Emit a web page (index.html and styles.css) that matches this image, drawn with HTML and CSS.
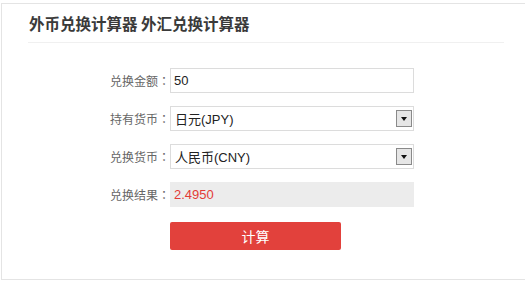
FILE: index.html
```html
<!DOCTYPE html>
<html lang="zh-CN">
<head>
<meta charset="utf-8">
<title>外币兑换计算器</title>
<link rel="stylesheet" href="styles.css">
</head>
<body>
<div class="panel">
  <div class="head"><h1 class="title">外币兑换计算器 外汇兑换计算器</h1></div>
  <div class="form">
    <div class="row">
      <label class="label">兑换金额<span class="colon" lang="zh-TW">：</span></label>
      <div class="field input">50</div>
    </div>
    <div class="row">
      <label class="label">持有货币<span class="colon" lang="zh-TW">：</span></label>
      <div class="field select"><span class="val">日元(JPY)</span><span class="arrow"><span class="tri"></span></span></div>
    </div>
    <div class="row">
      <label class="label">兑换货币<span class="colon" lang="zh-TW">：</span></label>
      <div class="field select"><span class="val">人民币(CNY)</span><span class="arrow"><span class="tri"></span></span></div>
    </div>
    <div class="row">
      <label class="label">兑换结果<span class="colon" lang="zh-TW">：</span></label>
      <div class="field result">2.4950</div>
    </div>
    <div class="row btnrow">
      <button class="btn">计算</button>
    </div>
  </div>
</div>
</body>
</html>
```
FILE: styles.css
```css
html, body {
  margin: 0;
  padding: 0;
  background: #fff;
  overflow: hidden;
}
body {
  font-family: "Liberation Sans", Arial, "Noto Sans CJK SC", sans-serif;
  color: #333;
}
.panel {
  margin: 3px 0 0 1px;
  width: 523px;
  height: 275px;
  border: 1px solid #e4e4e4;
  border-right: none;
}
.head {
  margin-left: 26px;
  width: 476px;
  height: 38px;
  border-bottom: 1px solid #f0f0f0;
  display: flex;
  align-items: center;
}
.title {
  margin: 0 0 0 1px;
  font-family: "Noto Sans CJK SC", sans-serif;
  font-size: 15.5px;
  font-weight: 700;
  color: #3a3a3a;
}
.form {
  padding-top: 25px;
  display: flex;
  flex-direction: column;
  gap: 13px;
}
.row {
  display: flex;
  align-items: center;
  height: 25px;
}
.label {
  width: 168px;
  text-align: right;
  font-family: "Noto Sans CJK SC", sans-serif;
  font-size: 12px;
  color: #666;
}
.colon {
  font-family: "Noto Sans CJK TC", "Noto Sans CJK SC", sans-serif;
}
.field {
  width: 244px;
  height: 25px;
  box-sizing: border-box;
  display: flex;
  align-items: center;
  font-family: "Liberation Sans", Arial, "Noto Sans CJK SC", sans-serif;
  font-size: 13px;
  color: #222;
}
.input {
  border: 1px solid #dcdcdc;
  padding-left: 3px;
}
.select {
  border: 1px solid #dcdcdc;
  padding-left: 4px;
  padding-right: 1px;
}
.select .val {
  flex: 1;
}
.arrow {
  width: 16px;
  height: 17px;
  box-sizing: border-box;
  border: 1px solid #8a8a8a;
  background: #e6e6e6;
  display: flex;
  align-items: center;
  justify-content: center;
}
.tri {
  width: 0;
  height: 0;
  border-left: 3.5px solid transparent;
  border-right: 3.5px solid transparent;
  border-top: 4px solid #111;
}
.result {
  background: #ececec;
  border: 1px solid #ececec;
  padding-left: 3px;
  color: #e33b36;
}
.btnrow {
  margin-top: 2px;
  height: 28px;
  padding-left: 168px;
}
.btn {
  width: 171px;
  height: 28px;
  border: none;
  border-radius: 2px;
  background: #e2413c;
  color: #fff;
  font-family: "Noto Sans CJK SC", sans-serif;
  font-size: 14px;
  padding: 0;
}
```
